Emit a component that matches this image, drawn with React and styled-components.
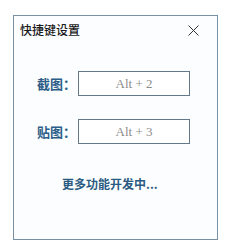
import styled, { createGlobalStyle } from 'styled-components'

const Global = createGlobalStyle`
  html, body {
    margin: 0;
    padding: 0;
    background: #ffffff;
  }
  body {
    font-family: "Noto Sans CJK SC", "Noto Sans", sans-serif;
  }
`

const shortcuts = [
  { label: '截图', keys: 'Alt + 2' },
  { label: '贴图', keys: 'Alt + 3' },
]

const App = () => {
  return (
    <>
      <Global />
      <Page>
        <Dialog>
          <TitleBar>
            <Title>快捷键设置</Title>
            <CloseButton aria-label="关闭">
              <svg width="11" height="11" viewBox="0 0 11 11">
                <path d="M0.5 0.5 L10.5 10.5 M10.5 0.5 L0.5 10.5" stroke="#333" strokeWidth="1" fill="none" />
              </svg>
            </CloseButton>
          </TitleBar>

          <Rows>
            {shortcuts.map((s) => (
              <Row key={s.label}>
                <Label>{s.label}：</Label>
                <KeyBox>{s.keys}</KeyBox>
              </Row>
            ))}
          </Rows>

          <More>更多功能开发中...</More>
        </Dialog>
      </Page>
    </>
  )
}

export default App

const Page = styled.div`
  width: 226px;
  height: 251px;
  padding: 15px 0 0 13px;
  box-sizing: border-box;
`

const Dialog = styled.div`
  width: 205px;
  height: 225px;
  box-sizing: border-box;
  border: 1px solid #7790a3;
  background: #fbfdfe;
  display: flex;
  flex-direction: column;
`

const TitleBar = styled.div`
  display: flex;
  align-items: center;
  justify-content: space-between;
  padding: 6px 18px 0 6px;
  height: 16px;
`

const Title = styled.span`
  font-size: 12px;
  line-height: 16px;
  color: #1a1a1a;
  font-weight: 500;
`

const CloseButton = styled.span`
  display: flex;
  width: 11px;
  height: 11px;
`

const Rows = styled.div`
  display: flex;
  flex-direction: column;
  gap: 23px;
  margin-top: 33px;
  padding-left: 23px;
`

const Row = styled.div`
  display: flex;
  align-items: center;
  gap: 2px;
`

const Label = styled.span`
  font-size: 13px;
  font-weight: 700;
  color: #2c5d88;
  line-height: 16px;
`

const KeyBox = styled.div`
  width: 112px;
  height: 25px;
  box-sizing: border-box;
  border: 1px solid #647887;
  background: #ffffff;
  display: flex;
  align-items: center;
  justify-content: center;
  font-family: "Liberation Serif", "DejaVu Serif", serif;
  font-size: 13px;
  color: #8c8c8c;
`

const More = styled.div`
  margin-top: 32px;
  padding-left: 48px;
  font-size: 12px;
  line-height: 16px;
  font-weight: 700;
  color: #2a5a82;
`
